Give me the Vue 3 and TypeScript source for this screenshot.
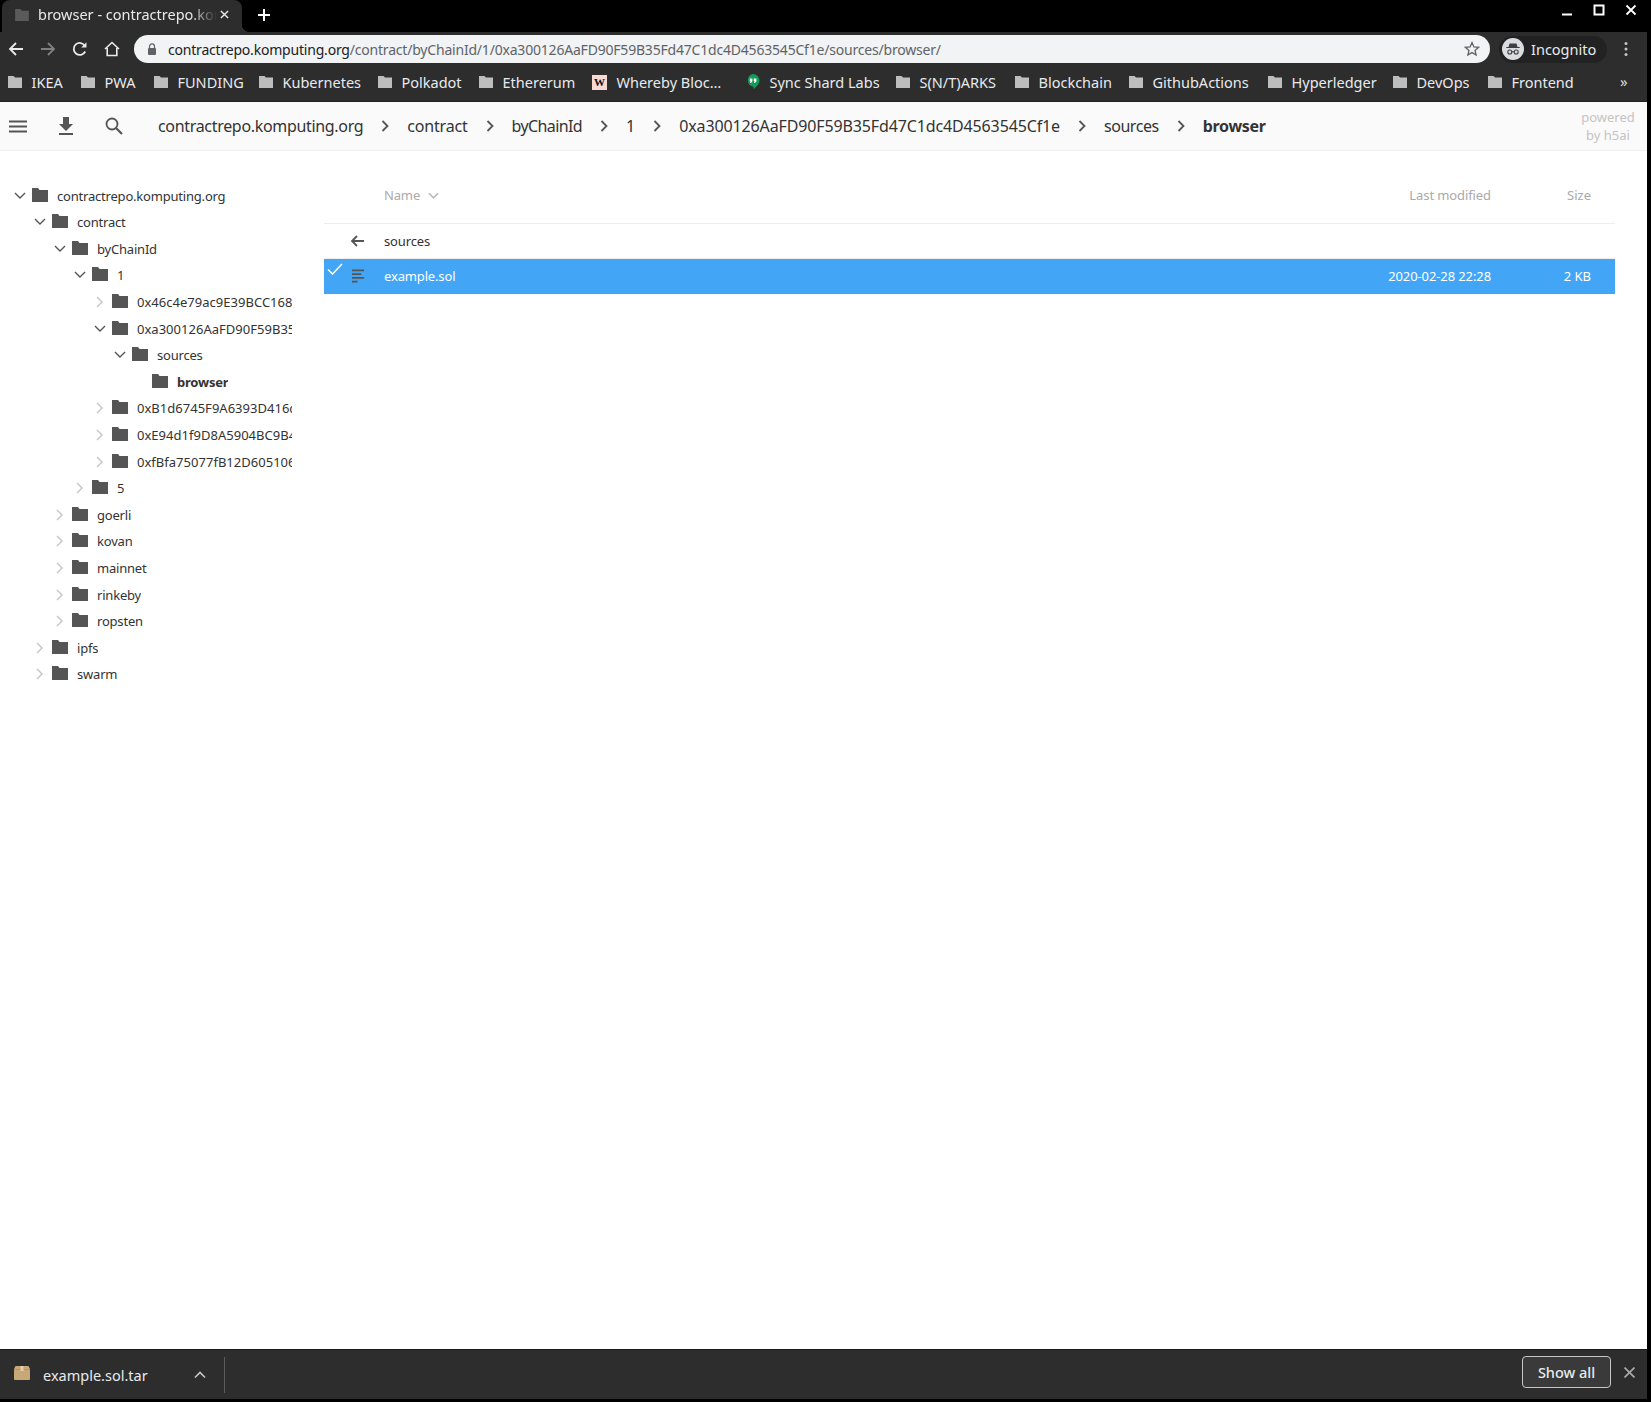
<script setup lang="ts">
const bookmarks = [
  { name: 'IKEA', w: 73 }, { name: 'PWA', w: 73 }, { name: 'FUNDING', w: 105 }, { name: 'Kubernetes', w: 119 },
  { name: 'Polkadot', w: 101 }, { name: 'Ethererum', w: 113 }, { name: 'Whereby Bloc…', w: 154, icon: 'w' },
  { name: 'Sync Shard Labs', w: 150, icon: 'h' }, { name: 'S(N/T)ARKS', w: 119 }, { name: 'Blockchain', w: 114 },
  { name: 'GithubActions', w: 139 }, { name: 'Hyperledger', w: 125 }, { name: 'DevOps', w: 95 }, { name: 'Frontend', w: 100 },
]
const crumbs = [
  { t: 'contractrepo.komputing.org', ls: -0.32 }, { t: 'contract', ls: -0.2 }, { t: 'byChainId', ls: -0.6 }, { t: '1', ls: 0 },
  { t: '0xa300126AaFD90F59B35Fd47C1dc4D4563545Cf1e', ls: -0.13 }, { t: 'sources', ls: -0.45 },
]
const tree = [
  { l: 0, t: 'contractrepo.komputing.org', c: 'open' }, { l: 1, t: 'contract', c: 'open' }, { l: 2, t: 'byChainId', c: 'open' },
  { l: 3, t: '1', c: 'open' }, { l: 4, t: '0x46c4e79ac9E39BCC1687a6393D416c', c: 'closed' },
  { l: 4, t: '0xa300126AaFD90F59B35Fd47C1dc4D45', c: 'open' }, { l: 5, t: 'sources', c: 'open' },
  { l: 6, t: 'browser', c: '', active: true }, { l: 4, t: '0xB1d6745F9A6393D416c0000000000', c: 'closed' },
  { l: 4, t: '0xE94d1f9D8A5904BC9B4000000000', c: 'closed' }, { l: 4, t: '0xfBfa75077fB12D60510600000000', c: 'closed' },
  { l: 3, t: '5', c: 'closed' }, { l: 2, t: 'goerli', c: 'closed' }, { l: 2, t: 'kovan', c: 'closed' },
  { l: 2, t: 'mainnet', c: 'closed' }, { l: 2, t: 'rinkeby', c: 'closed' }, { l: 2, t: 'ropsten', c: 'closed' },
  { l: 1, t: 'ipfs', c: 'closed' }, { l: 1, t: 'swarm', c: 'closed' },
]
</script>

<template>
  <div class="win">
    <div class="tabstrip">
      <div class="tab">
        <svg class="tab-fav" viewBox="0 0 16 14"><path d="M0 0h6l2 2h8v12H0z" fill="#5a5a5a" /></svg>
        <span class="tab-title">browser - contractrepo.komputing.org</span>
        <svg class="tab-x" viewBox="0 0 10 10"><path d="M1 1l8 8M9 1l-8 8" stroke="#e8eaed" stroke-width="1.6" /></svg>
      </div>
      <svg class="tab-plus" viewBox="0 0 12 12"><path d="M6 0v12M0 6h12" stroke="#fff" stroke-width="2" /></svg>
      <div class="winctl">
        <svg viewBox="0 0 12 12"><path d="M1 10.500h10" stroke="#fff" stroke-width="2" /></svg>
        <svg viewBox="0 0 12 12"><rect x="1.500" y="1.500" width="9" height="9" fill="none" stroke="#fff" stroke-width="2" /></svg>
        <svg viewBox="0 0 12 12"><path d="M1.500 1.500l9 9M10.500 1.500l-9 9" stroke="#fff" stroke-width="1.800" /></svg>
      </div>
    </div>

    <div class="toolbar">
      <svg class="nav" viewBox="0 0 16 16"><path d="M15 8H2M8 2L2 8l6 6" fill="none" stroke="#e8eaed" stroke-width="1.800" /></svg>
      <svg class="nav" viewBox="0 0 16 16"><path d="M1 8h13M8 2l6 6-6 6" fill="none" stroke="#7d7f82" stroke-width="1.800" /></svg>
      <svg class="nav" viewBox="0 0 16 16"><path d="M13.200 10.500A6 6 0 1 1 13 5" fill="none" stroke="#e8eaed" stroke-width="1.800" /><path d="M14.500 1.200v5.300H9.200z" fill="#e8eaed" /></svg>
      <svg class="nav" viewBox="0 0 16 16"><path d="M1 8l7-6.500L15 8M3.200 7v7.500h9.600V7" fill="none" stroke="#e8eaed" stroke-width="1.600" /></svg>
      <div class="omni">
        <svg class="lock" viewBox="0 0 10 12"><path d="M2.500 5V3.400a2.500 2.500 0 0 1 5 0V5" fill="none" stroke="#5f6368" stroke-width="1.200" /><rect x="1" y="5" width="8" height="7" rx="1" fill="#5f6368" /></svg>
        <span class="url"><b>contractrepo.komputing.org</b>/contract/byChainId/1/0xa300126AaFD90F59B35Fd47C1dc4D4563545Cf1e/sources/browser/</span>
        <svg class="star" viewBox="0 0 16 16"><path d="M8 1.600l1.900 4.300 4.700.4-3.600 3.100 1.100 4.600L8 11.600 3.900 14l1.100-4.600-3.600-3.100 4.700-.4z" fill="none" stroke="#5f6368" stroke-width="1.300" /></svg>
      </div>
      <div class="incog">
        <svg class="incog-ic" viewBox="0 0 22 22">
          <circle cx="11" cy="11" r="11" fill="#dadce0" />
          <path d="M7.500 5.500h7l1 3.500h2.200v1H4.300V9h2.200z" fill="#3c4043" />
          <circle cx="7.800" cy="14" r="2" fill="none" stroke="#3c4043" stroke-width="1.100" />
          <circle cx="14.200" cy="14" r="2" fill="none" stroke="#3c4043" stroke-width="1.100" />
          <path d="M9.800 13.800h2.400" stroke="#3c4043" />
        </svg>
        <span>Incognito</span>
      </div>
      <svg class="dots" viewBox="0 0 4 16"><circle cx="2" cy="2.500" r="1.500" fill="#c4c7c9" /><circle cx="2" cy="8" r="1.500" fill="#c4c7c9" /><circle cx="2" cy="13.500" r="1.500" fill="#c4c7c9" /></svg>
    </div>

    <div class="bookmarks">
      <div v-for="b in bookmarks" :key="b.name" class="bm" :style="{ width: b.w + 'px' }">
        <span v-if="b.icon === 'w'" class="bm-w">W</span>
        <svg v-else-if="b.icon === 'h'" class="bm-hang" viewBox="0 0 14 16"><path d="M7 0a6.500 6.500 0 0 1 6.500 6.500c0 3.500-3 6.500-6 8.500v-2.200A6.500 6.500 0 0 1 7 0z" fill="#0f9d58" /><path d="M3.800 4.500h2.600v2.800L5 9H3.800l.8-1.700h-.8zM7.800 4.500h2.600v2.800L9 9H7.800l.8-1.700h-.8z" fill="#fff" /></svg>
        <svg v-else class="bm-ic" viewBox="0 0 14 12"><path d="M0 0h5.500l1.500 1.500h7V12H0z" fill="#bdbdbd" /></svg>
        <span>{{ b.name }}</span>
      </div>
      <span class="bm-more">»</span>
    </div>

    <div class="appbar">
      <div class="tools">
        <svg class="tool t-menu" viewBox="0 0 18 13"><path d="M0 1.500h18M0 6.500h18M0 11.500h18" stroke="#555" stroke-width="1.800" /></svg>
        <svg class="tool t-dl" viewBox="0 0 14 18"><path d="M4 0h6v7h4l-7 7-7-7h4zM0 16h14v2H0z" fill="#555" /></svg>
        <svg class="tool t-search" viewBox="0 0 18 18"><circle cx="7" cy="7" r="5.500" fill="none" stroke="#555" stroke-width="1.800" /><path d="M11 11l6 6" stroke="#555" stroke-width="2.200" /></svg>
      </div>
      <template v-for="c in crumbs" :key="c.t">
        <span class="crumb" :style="{ letterSpacing: c.ls + 'px' }">{{ c.t }}</span>
        <svg class="sep" viewBox="0 0 8 12"><path d="M1.500 1l5 5-5 5" fill="none" stroke="#555" stroke-width="1.800" /></svg>
      </template>
      <span class="crumb active">browser</span>
      <div class="powered">powered<br />by h5ai</div>
    </div>

    <div class="main">
      <aside class="tree">
        <div v-for="n in tree" :key="n.t" class="node" :class="{ active: n.active, hash: n.t.startsWith('0x') }" :style="{ paddingLeft: 12 + n.l * 20 + 'px' }">
          <span class="chev">
            <svg v-if="n.c === 'open'" viewBox="0 0 12 8"><path d="M1 1l5 5 5-5" fill="none" stroke="#555" stroke-width="1.400" /></svg>
            <svg v-else-if="n.c === 'closed'" class="chev-r" viewBox="0 0 8 12"><path d="M1 1l5 5-5 5" fill="none" stroke="#c4c4c4" stroke-width="1.400" /></svg>
          </span>
          <svg class="folder" viewBox="0 0 16 14"><path d="M0 0h6l1.500 2H16v12H0z" fill="#555" /></svg>
          <span class="node-t">{{ n.t }}</span>
        </div>
      </aside>

      <section class="list">
        <div class="row head">
          <span></span>
          <span class="name">Name <svg class="sort" viewBox="0 0 12 8"><path d="M1 1l5 5 5-5" fill="none" stroke="#bbb" stroke-width="1.800" /></svg></span>
          <span class="date">Last modified</span>
          <span class="size">Size</span>
        </div>
        <div class="row up">
          <svg class="ic" viewBox="0 0 14 12"><path d="M14 6H2M7 1L2 6l5 5" fill="none" stroke="#555" stroke-width="1.800" /></svg>
          <span class="name">sources</span>
          <span></span><span></span>
        </div>
        <div class="row sel">
          <svg class="check" viewBox="0 0 16 12"><path d="M1 6.500l4.500 4.500L15 1" fill="none" stroke="#fff" stroke-width="1.500" /></svg>
          <svg class="ic" viewBox="0 0 14 14"><path d="M0 1h13M0 5h10M0 9h13M0 13h6" stroke="#555" stroke-width="1.800" /></svg>
          <span class="name">example.sol</span>
          <span class="date">2020-02-28 22:28</span>
          <span class="size">2 KB</span>
        </div>
      </section>
    </div>

    <div class="dlbar">
      <svg class="pkg" viewBox="0 0 16 14"><path d="M1.500 0h13L16 3v10a1 1 0 0 1-1 1H1a1 1 0 0 1-1-1V3z" fill="#c9a877" /><path d="M0 3.500h16" stroke="#a98a5c" stroke-width=".6" /><path d="M6.500 0h3v5h-3z" fill="#e4cfa8" /></svg>
      <span class="dl-name">example.sol.tar</span>
      <svg class="dl-up" viewBox="0 0 12 8"><path d="M1 6.500l5-5 5 5" fill="none" stroke="#c4c7c9" stroke-width="1.600" /></svg>
      <span class="dl-sep"></span>
      <button class="showall">Show all</button>
      <svg class="dl-x" viewBox="0 0 10 10"><path d="M.5.5l9 9M9.500.5l-9 9" stroke="#a9abad" stroke-width="1.500" /></svg>
    </div>
  </div>
</template>

<style scoped>
.win {
  width: 1647px;
  height: 1399px;
  display: flex;
  flex-direction: column;
  background: #fff;
  font-family: "Noto Sans", sans-serif;
  overflow: hidden;
}
.tabstrip {
  height: 32px;
  background: #000;
  display: flex;
  align-items: flex-start;
  flex: none;
}
.tab {
  width: 240px;
  height: 32px;
  margin-left: 2px;
  padding-bottom: 3px;
  box-sizing: border-box;
  background: #2d2d2d;
  border-radius: 8px 8px 0 0;
  display: flex;
  align-items: center;
  color: #e8eaed;
  font-size: 14.5px;
  position: relative;
}
.tab::after {
  content: "";
  position: absolute;
  right: -8px;
  bottom: 0;
  width: 8px;
  height: 8px;
  background: radial-gradient(circle at 100% 0, #000 8px, #2d2d2d 8.5px);
}
.tab-fav { width: 14px; height: 12px; margin-left: 13px; flex: none; }
.tab-title {
  width: 179px;
  margin: 0 0 2px 9px;
  white-space: nowrap;
  overflow: hidden;
  -webkit-mask-image: linear-gradient(to right, #000 85%, transparent);
  mask-image: linear-gradient(to right, #000 85%, transparent);
}
.tab-x { width: 9px; height: 9px; margin-left: 3px; flex: none; }
.tab-plus { width: 12px; height: 12px; margin: 9px 0 0 16px; }
.winctl { margin-left: auto; display: flex; gap: 20px; padding: 4px 10px 0 0; }
.winctl svg { width: 12px; height: 12px; }
.toolbar {
  height: 34px;
  background: #2d2d2d;
  display: flex;
  align-items: center;
  padding: 0 0 0 8px;
  flex: none;
}
.nav { width: 16px; height: 16px; margin-right: 16px; flex: none; }
.omni {
  width: 1356px;
  height: 28px;
  margin-left: -2px;
  background: #f1f3f4;
  border-radius: 14px;
  display: flex;
  align-items: center;
  font-size: 14px;
  letter-spacing: -0.2px;
  color: #5f6368;
  flex: none;
}
.lock { width: 10px; height: 12px; margin-left: 13px; flex: none; }
.url { margin-left: 11px; white-space: nowrap; }
.url b { font-weight: 400; color: #202124; }
.star { width: 16px; height: 16px; margin-left: auto; margin-right: 10px; }
.incog {
  width: 108px;
  height: 27px;
  margin-left: 9px;
  border-radius: 14px;
  background: #222;
  display: flex;
  align-items: center;
  color: #e8eaed;
  font-size: 14.5px;
  flex: none;
}
.incog-ic { width: 22px; height: 22px; margin: 0 7px 0 3px; }
.dots { width: 4px; height: 16px; margin-left: 17px; }
.bookmarks {
  height: 32px;
  padding: 0 0 3px 8px;
  background: #2d2d2d;
  border-bottom: 1px solid #222;
  display: flex;
  align-items: center;
  flex: none;
  position: relative;
  color: #e8eaed;
  font-size: 14.5px;
}
.bm { display: flex; align-items: center; gap: 9.5px; white-space: nowrap; flex: none; }
.bm-ic { width: 14px; height: 12px; flex: none; }
.bm-hang { width: 14px; height: 16px; flex: none; }
.bm-w {
  width: 15px;
  height: 15px;
  background: #f9d9d2;
  color: #111;
  font: 700 11px "Liberation Serif", serif;
  display: flex;
  align-items: center;
  justify-content: center;
  flex: none;
}
.bm-more { position: absolute; left: 1620px; top: 5px; font-size: 15px; color: #d8dadc; }
.appbar {
  height: 48px;
  background: #fafafa;
  border-bottom: 1px solid #eee;
  display: flex;
  align-items: center;
  position: relative;
  flex: none;
  color: #333;
  font-size: 16px;
}
.tools { width: 158px; display: flex; align-items: center; padding-left: 9px; box-sizing: border-box; flex: none; }
.tool { flex: none; }
.t-menu { width: 18px; height: 13px; }
.t-dl { width: 14px; height: 18px; margin-left: 32px; }
.t-search { width: 18px; height: 18px; margin-left: 32px; }
.crumb { white-space: nowrap; }
.crumb.active { font-weight: 700; letter-spacing: -0.3px; }
.sep { width: 8px; height: 12px; margin: 0 18px; flex: none; }
.powered {
  position: absolute;
  right: 9px;
  top: 6px;
  width: 60px;
  text-align: center;
  font-size: 13px;
  line-height: 18px;
  color: #c4c4c4;
}
.main { flex: 1; display: flex; min-height: 0; }
.tree {
  width: 292px;
  padding-top: 31.3px;
  overflow: hidden;
  flex: none;
  font-size: 13px;
  letter-spacing: -0.2px;
  color: #333;
}
.node { height: 26.6px; display: flex; align-items: center; white-space: nowrap; }
.node.hash { letter-spacing: 0.02px; }
.node.active .node-t { font-weight: 700; }
.chev { width: 20px; height: 12px; display: flex; align-items: center; flex: none; }
.chev svg { width: 12px; height: 8px; margin-left: 2px; }
.chev .chev-r { width: 8px; height: 12px; margin-left: 4px; }
.folder { width: 16px; height: 14px; flex: none; margin-bottom: 2px; }
.node-t { margin-left: 9px; overflow: hidden; }
.list { margin-left: 32px; width: 1291px; padding-top: 28px; font-size: 13px; color: #333; }
.row {
  display: grid;
  grid-template-columns: 60px 1fr 160px 124px;
  align-items: center;
  position: relative;
}
.row .name { letter-spacing: -0.15px; }
.row .date { text-align: right; letter-spacing: -0.1px; }
.row .size { text-align: right; padding-right: 24px; }
.head { padding-bottom: 12px; border-bottom: 1px solid #eee; color: #aaa; height: 32px; }
.sort { width: 11px; height: 8px; margin-left: 5px; }
.up { height: 34px; border-bottom: 1px solid #eee; }
.up .ic { width: 14px; height: 12px; margin-left: 26px; }
.sel { height: 34px; padding-bottom: 1px; background: #42a5f5; color: #fff; }
.sel .ic { width: 13px; height: 14px; margin-left: 28px; }
.check { position: absolute; left: 3px; top: 4px; width: 16px; height: 12px; }
.dlbar {
  height: 49px;
  background: #2d2d2d;
  border-top: 1px solid #1a1a1a;
  display: flex;
  align-items: center;
  color: #e8eaed;
  flex: none;
  font-size: 14.5px;
}
.pkg { width: 16px; height: 14px; margin: -4px 0 0 14px; }
.dl-name { margin-left: 13px; width: 130px; }
.dl-up { width: 12px; height: 8px; margin-left: 21px; }
.dl-sep { width: 1px; height: 36px; background: #5a5a5a; margin-left: 18px; }
.showall {
  width: 89px;
  height: 32px;
  margin: -6px 0 0 auto;
  background: #3a3a3a;
  border: 1px solid #c4c7c9;
  border-radius: 4px;
  color: #e8eaed;
  font: 500 14.5px "Noto Sans", sans-serif;
  padding: 0;
}
.dl-x { width: 11px; height: 11px; margin: -4px 12px 0 13px; }
</style>

<style>
html, body { background: #000; }
</style>
